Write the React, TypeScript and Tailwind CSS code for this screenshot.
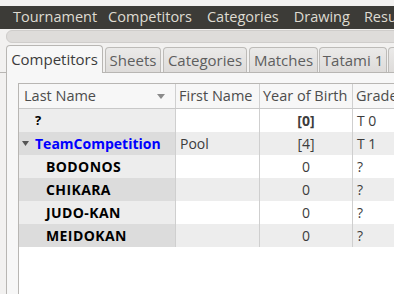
import React from "react";

const font = { fontFamily: '"Open Sans", "DejaVu Sans", sans-serif' };

type Row = { name: string; first: string; year: string; grade: string; kind: "q" | "team" | "club" };
const rows: Row[] = [
  { name: "?", first: "", year: "[0]", grade: "T 0", kind: "q" },
  { name: "TeamCompetition", first: "Pool", year: "[4]", grade: "T 1", kind: "team" },
  { name: "BODONOS", first: "", year: "0", grade: "?", kind: "club" },
  { name: "CHIKARA", first: "", year: "0", grade: "?", kind: "club" },
  { name: "JUDO-KAN", first: "", year: "0", grade: "?", kind: "club" },
  { name: "MEIDOKAN", first: "", year: "0", grade: "?", kind: "club" },
];

export default function App() {
  return (
    <div className="w-[394px] h-[294px] overflow-hidden bg-[#f2f1f0] text-[13px] text-[#3c3c3c]" style={font}>
      <div className="h-[6px]" />
      <div className="h-[23px] bg-[#3c3b37] text-[#dfdbd2] flex items-center whitespace-nowrap text-[14.5px] leading-none overflow-hidden">
        <span className="pl-[13px] pr-[11px] shrink-0">Tournament</span>
        <span className="pr-[15px] shrink-0">Competitors</span>
        <span className="pr-[15px] shrink-0">Categories</span>
        <span className="pr-[14px] shrink-0">Drawing</span>
        <span className="shrink-0">Results</span>
      </div>
      <div className="h-[1px]" />
      <div className="ml-[6px] mr-[-10px] h-[13px] rounded-[6px] bg-[#dedcda] border border-[#cfcdcb]" />
      <div className="h-[2px]" />
      <div className="pl-[6px] flex items-end h-[28px] whitespace-nowrap relative">
        <div className="shrink-0 h-[28px] w-[97px] bg-[#f7f7f7] border border-b-0 border-[#b8b6b3] rounded-t-[4px] flex items-center justify-center text-[15px] text-[#3c3c3c] relative z-10">
          Competitors
        </div>
        {[
          ["Sheets", 56, 2],
          ["Categories", 84, 2],
          ["Matches", 69, 2],
          ["Tatami 1", 68, 1],
          ["", 30, 1],
        ].map(([t, w, m]) => (
          <div
            key={t as string}
            style={{ width: w as number, marginLeft: m as number }}
            className="shrink-0 h-[26px] bg-gradient-to-b from-[#ebeae9] to-[#dddbd9] border border-b-0 border-[#bdbbb8] rounded-t-[4px] flex items-center justify-center text-[15px] text-[#5e5e5e]"
          >
            {t}
          </div>
        ))}
        <div className="absolute left-0 right-0 bottom-0 h-[1px] bg-[#b8b6b3]" />
      </div>
      <div className="ml-[6px] h-[221px] border-l border-[#b8b6b3] bg-[#f7f7f7] pl-[11px] pt-[10px]">
        <div className="h-full bg-white border-l border-t border-[#b8b6b3]">
          <div className="flex h-[25px] bg-[#f7f7f7] border-b border-[#c8c8c8] text-[#4c4c4c] text-[14.5px] whitespace-nowrap">
            <div className="w-[157px] shrink-0 border-r border-[#d0d0d0] flex items-center pl-[5px] pr-[10px] justify-between">
              <span>Last Name</span>
              <svg width="8" height="5" viewBox="0 0 8 5"><path d="M0 0H8L4 5Z" fill="#8a8a8a" /></svg>
            </div>
            <div className="w-[84px] shrink-0 border-r border-[#d0d0d0] flex items-center pl-[3px] overflow-hidden">First Name</div>
            <div className="w-[93px] shrink-0 border-r border-[#d0d0d0] flex items-center pl-[3px] overflow-hidden">Year of Birth</div>
            <div className="flex-1 flex items-center pl-[3px] overflow-hidden">Grade</div>
          </div>
          {rows.map((r, i) => {
            const odd = i % 2 === 1;
            return (
              <div key={i} className={`flex h-[23px] whitespace-nowrap ${odd ? "bg-[#ededed]" : "bg-white"}`}>
                <div className={`w-[157px] shrink-0 border-r border-[#cfcfcf] flex items-center ${odd ? "bg-[#dcdcdc]" : "bg-[#ededed]"}`}>
                  {r.kind === "q" && <span className="pl-[16px] font-bold text-black">?</span>}
                  {r.kind === "team" && (
                    <>
                      <svg className="ml-[3px]" width="7" height="7" viewBox="0 0 7 7"><path d="M0 1H7L3.5 6Z" fill="#555" /></svg>
                      <span className="pl-[6px] font-bold text-[#0000ff] text-[14px]">{r.name}</span>
                    </>
                  )}
                  {r.kind === "club" && <span className="pl-[27px] font-bold text-black text-[14px] tracking-[0.4px]">{r.name}</span>}
                </div>
                <div className="w-[84px] shrink-0 border-r border-[#cfcfcf] flex items-center pl-[4px] text-[14px] text-[#3c3c3c]">{r.first}</div>
                <div className={`w-[93px] shrink-0 border-r border-[#cfcfcf] flex items-center justify-center text-[14px] ${r.kind === "q" ? "font-bold text-[#3c3c3c]" : "text-[#3c3c3c]"}`}>
                  {r.year}
                </div>
                <div className="flex-1 flex items-center pl-[4px] text-[14px] text-[#3c3c3c]">{r.grade}</div>
              </div>
            );
          })}
        </div>
      </div>
    </div>
  );
}
